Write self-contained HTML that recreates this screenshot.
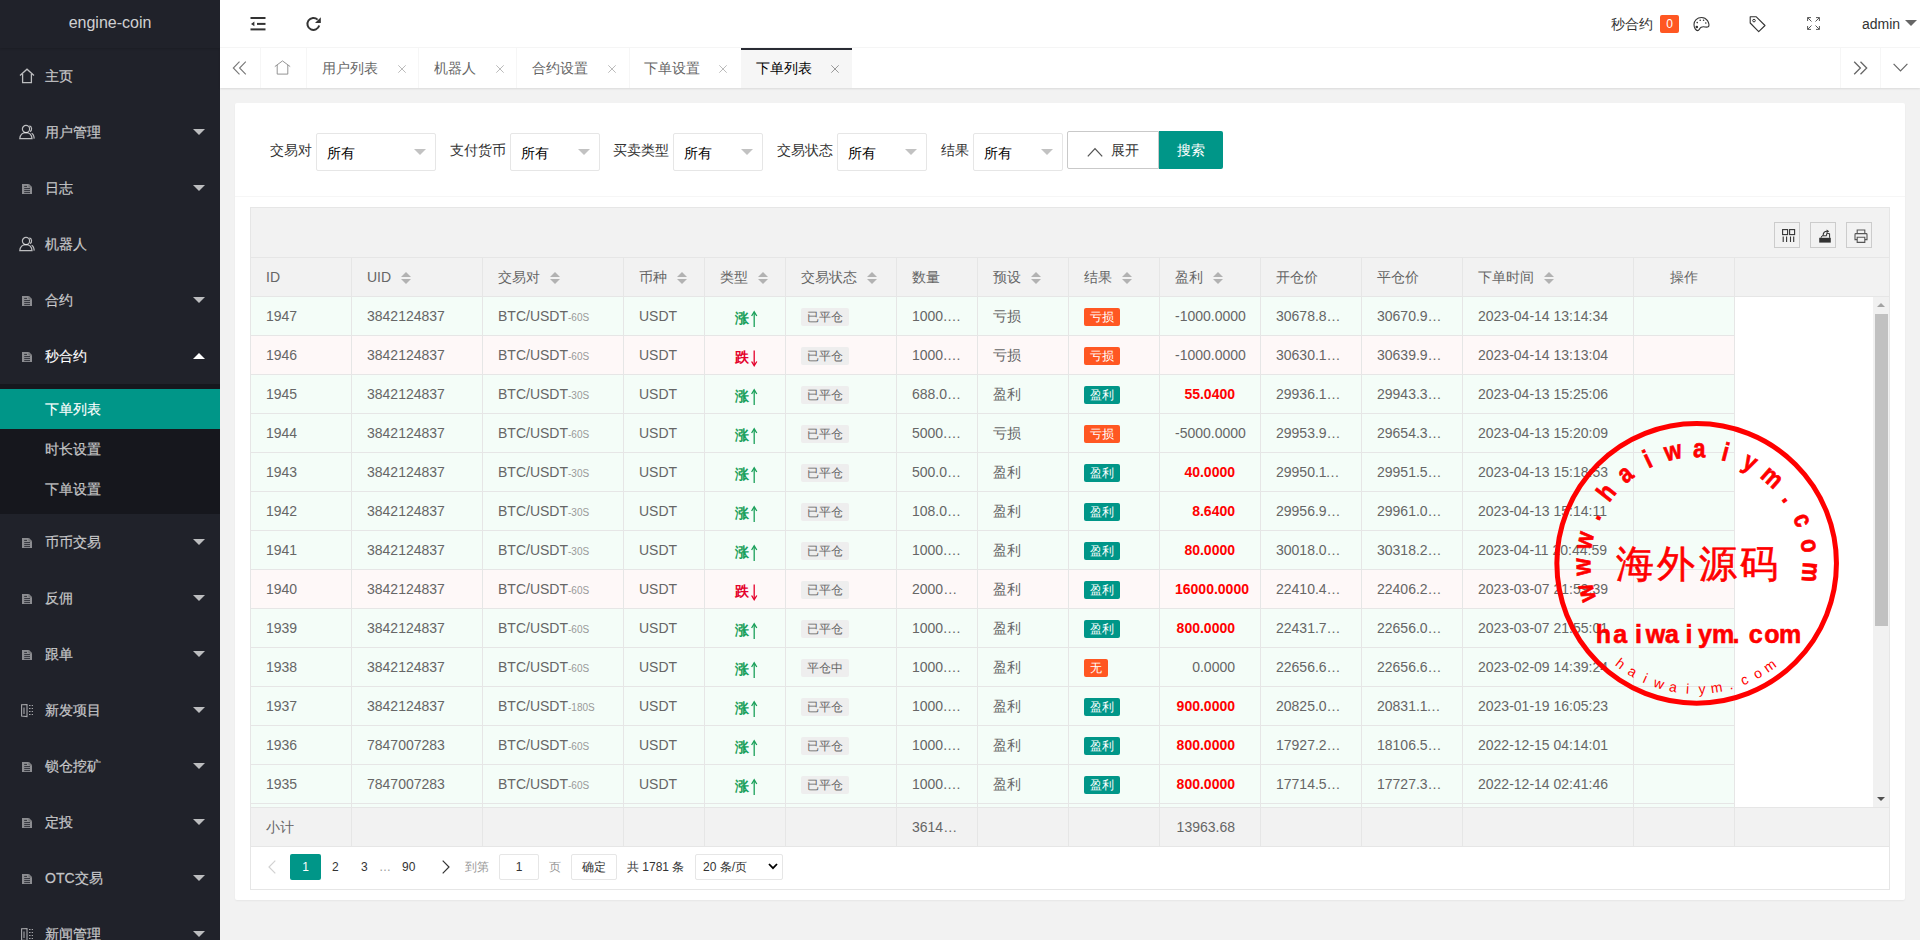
<!DOCTYPE html><html><head><meta charset="utf-8"><title>engine-coin</title><style>
*{box-sizing:border-box;margin:0;padding:0}
html,body{width:1920px;height:940px;overflow:hidden}
body{background:#f2f2f2;font-family:"Liberation Sans",sans-serif;font-size:14px;color:#666;position:relative}
.a{position:absolute}
svg{position:absolute;overflow:visible}
#side{left:0;top:0;width:220px;height:940px;background:#20222A;overflow:hidden}
#logo{left:0;top:0;width:220px;height:48px;background:#20222A;box-shadow:0 1px 2px 0 rgba(0,0,0,.15);color:rgba(255,255,255,.8);font-size:16px;text-align:center;line-height:46px;z-index:2}
.nav{position:absolute;left:0;width:220px;height:56px;color:rgba(255,255,255,.7)}
.nav .tx{position:absolute;left:45px;top:0;line-height:56px;white-space:nowrap;-webkit-text-stroke:0.3px rgba(255,255,255,.5)}
.nav .ar{position:absolute;left:193px;top:25px;width:0;height:0;border-left:6px solid transparent;border-right:6px solid transparent;border-top:6px solid rgba(255,255,255,.7)}
.nav .ar.up{top:25px;border-top:0;border-bottom:6px solid #fff}
#sub{left:0;top:384px;width:220px;height:130px;background:rgba(0,0,0,.3)}
.sub{position:absolute;left:0;width:220px;height:40px;line-height:40px;padding-left:45px;color:rgba(255,255,255,.7);-webkit-text-stroke:0.3px rgba(255,255,255,.5)}
.sub.on{background:#009688;color:#fff}
#hdr{left:220px;top:0;width:1700px;height:48px;background:#fff;border-bottom:1px solid #f6f6f6}
#tabs{left:220px;top:48px;width:1700px;height:40px;background:#fff;box-shadow:0 1px 2px 0 rgba(0,0,0,.1);z-index:1}
.tab{position:absolute;top:0;height:40px;line-height:40px;color:#666;border-right:1px solid #f6f6f6;white-space:nowrap}
.tab .x{position:absolute;top:17px;width:8px;height:8px}
#card{left:235px;top:103px;width:1670px;height:797px;background:#fff;border-radius:2px;box-shadow:0 1px 2px 0 rgba(0,0,0,.05)}
.lbl{position:absolute;color:#333;white-space:nowrap;line-height:20px}
.sel{position:absolute;height:38px;border:1px solid #e6e6e6;background:#fff;border-radius:2px}
.sel span{position:absolute;left:10px;top:0;line-height:38px;color:#000}
.sel i{position:absolute;right:9px;top:15px;width:0;height:0;border-left:6px solid transparent;border-right:6px solid transparent;border-top:6px solid #c2c2c2}
#tbl{left:250px;top:207px;width:1640px;height:683px;border:1px solid #e6e6e6;background:#fff}
.th,.td{position:absolute;overflow:hidden;white-space:nowrap}
.vl{position:absolute;width:1px;background:#e6e6e6}
.hl{position:absolute;height:1px;background:#e6e6e6}
.cell{position:absolute;height:38px;line-height:38px;padding:0 15px;overflow:hidden;white-space:nowrap;text-overflow:ellipsis}
.bdg{display:inline-block;height:18px;line-height:18px;padding:0 6px;font-size:12px;color:#fff;border-radius:2px;vertical-align:middle;position:relative;top:0px}
.tb{position:absolute;top:14px;width:26px;height:26px;border:1px solid #ccc}
</style></head><body>
<div id="side" class="a"><div id="logo" class="a">engine-coin</div>
<div class="nav" style="top:48px"><svg style="left:19px;top:20px" width="16" height="16" viewBox="0 0 16 16"><path d="M1 7.5 L8 1.2 L15 7.5 M3.6 6 V14.6 H12.4 V6" fill="none" stroke="rgba(255,255,255,.7)" stroke-width="1.3"/></svg><span class="tx">主页</span></div>
<div class="nav" style="top:104px"><svg style="left:19px;top:20px" width="16" height="16" viewBox="0 0 16 16"><g fill="none" stroke="rgba(255,255,255,.7)" stroke-width="1.2"><circle cx="7" cy="5" r="3.6"/><path d="M0.8 14.6 C1.2 10.5 3.5 8.6 7 8.6 C10.5 8.6 12.6 10.5 13 14.6 Z"/><path d="M10.4 1.8 C13 2.3 13.4 6.5 11 7.6 M12.6 9.2 C14.4 10 15 12 15.2 14.6"/></g></svg><span class="tx">用户管理</span><i class="ar"></i></div>
<div class="nav" style="top:160px"><svg style="left:22px;top:24px" width="10" height="10" viewBox="0 0 10 10"><path d="M0 0 H7 L10 3 V10 H0 Z" fill="#8c8d91"/><path d="M2.2 2.4 H5 M2.2 4.6 H8 M2.2 6.6 H8 M2.2 8.6 H8" stroke="#25272e" stroke-width="0.9"/><path d="M7 0 V3 H10" fill="none" stroke="#5a5b60" stroke-width="0.6"/></svg><span class="tx">日志</span><i class="ar"></i></div>
<div class="nav" style="top:216px"><svg style="left:19px;top:20px" width="16" height="16" viewBox="0 0 16 16"><g fill="none" stroke="rgba(255,255,255,.7)" stroke-width="1.2"><circle cx="7" cy="5" r="3.6"/><path d="M0.8 14.6 C1.2 10.5 3.5 8.6 7 8.6 C10.5 8.6 12.6 10.5 13 14.6 Z"/><path d="M10.4 1.8 C13 2.3 13.4 6.5 11 7.6 M12.6 9.2 C14.4 10 15 12 15.2 14.6"/></g></svg><span class="tx">机器人</span></div>
<div class="nav" style="top:272px"><svg style="left:22px;top:24px" width="10" height="10" viewBox="0 0 10 10"><path d="M0 0 H7 L10 3 V10 H0 Z" fill="#8c8d91"/><path d="M2.2 2.4 H5 M2.2 4.6 H8 M2.2 6.6 H8 M2.2 8.6 H8" stroke="#25272e" stroke-width="0.9"/><path d="M7 0 V3 H10" fill="none" stroke="#5a5b60" stroke-width="0.6"/></svg><span class="tx">合约</span><i class="ar"></i></div>
<div class="nav" style="top:328px"><svg style="left:22px;top:24px" width="10" height="10" viewBox="0 0 10 10"><path d="M0 0 H7 L10 3 V10 H0 Z" fill="#8c8d91"/><path d="M2.2 2.4 H5 M2.2 4.6 H8 M2.2 6.6 H8 M2.2 8.6 H8" stroke="#25272e" stroke-width="0.9"/><path d="M7 0 V3 H10" fill="none" stroke="#5a5b60" stroke-width="0.6"/></svg><span class="tx" style="color:#fff">秒合约</span><i class="ar up"></i></div>
<div class="nav" style="top:514px"><svg style="left:22px;top:24px" width="10" height="10" viewBox="0 0 10 10"><path d="M0 0 H7 L10 3 V10 H0 Z" fill="#8c8d91"/><path d="M2.2 2.4 H5 M2.2 4.6 H8 M2.2 6.6 H8 M2.2 8.6 H8" stroke="#25272e" stroke-width="0.9"/><path d="M7 0 V3 H10" fill="none" stroke="#5a5b60" stroke-width="0.6"/></svg><span class="tx">币币交易</span><i class="ar"></i></div>
<div class="nav" style="top:570px"><svg style="left:22px;top:24px" width="10" height="10" viewBox="0 0 10 10"><path d="M0 0 H7 L10 3 V10 H0 Z" fill="#8c8d91"/><path d="M2.2 2.4 H5 M2.2 4.6 H8 M2.2 6.6 H8 M2.2 8.6 H8" stroke="#25272e" stroke-width="0.9"/><path d="M7 0 V3 H10" fill="none" stroke="#5a5b60" stroke-width="0.6"/></svg><span class="tx">反佣</span><i class="ar"></i></div>
<div class="nav" style="top:626px"><svg style="left:22px;top:24px" width="10" height="10" viewBox="0 0 10 10"><path d="M0 0 H7 L10 3 V10 H0 Z" fill="#8c8d91"/><path d="M2.2 2.4 H5 M2.2 4.6 H8 M2.2 6.6 H8 M2.2 8.6 H8" stroke="#25272e" stroke-width="0.9"/><path d="M7 0 V3 H10" fill="none" stroke="#5a5b60" stroke-width="0.6"/></svg><span class="tx">跟单</span><i class="ar"></i></div>
<div class="nav" style="top:682px"><svg style="left:21px;top:22px" width="13" height="13" viewBox="0 0 13 13"><g fill="none" stroke="rgba(255,255,255,.6)" stroke-width="1.1"><path d="M0.6 0.8 V12 L6 12.6 V0.6 Z"/><path d="M3 3.5 V10"/><path d="M8 1.5 H12 M8 4.5 H12 M8 7.5 H12 M8 10.5 H12" stroke-dasharray="1.5 1.2"/></g></svg><span class="tx">新发项目</span><i class="ar"></i></div>
<div class="nav" style="top:738px"><svg style="left:22px;top:24px" width="10" height="10" viewBox="0 0 10 10"><path d="M0 0 H7 L10 3 V10 H0 Z" fill="#8c8d91"/><path d="M2.2 2.4 H5 M2.2 4.6 H8 M2.2 6.6 H8 M2.2 8.6 H8" stroke="#25272e" stroke-width="0.9"/><path d="M7 0 V3 H10" fill="none" stroke="#5a5b60" stroke-width="0.6"/></svg><span class="tx">锁仓挖矿</span><i class="ar"></i></div>
<div class="nav" style="top:794px"><svg style="left:22px;top:24px" width="10" height="10" viewBox="0 0 10 10"><path d="M0 0 H7 L10 3 V10 H0 Z" fill="#8c8d91"/><path d="M2.2 2.4 H5 M2.2 4.6 H8 M2.2 6.6 H8 M2.2 8.6 H8" stroke="#25272e" stroke-width="0.9"/><path d="M7 0 V3 H10" fill="none" stroke="#5a5b60" stroke-width="0.6"/></svg><span class="tx">定投</span><i class="ar"></i></div>
<div class="nav" style="top:850px"><svg style="left:22px;top:24px" width="10" height="10" viewBox="0 0 10 10"><path d="M0 0 H7 L10 3 V10 H0 Z" fill="#8c8d91"/><path d="M2.2 2.4 H5 M2.2 4.6 H8 M2.2 6.6 H8 M2.2 8.6 H8" stroke="#25272e" stroke-width="0.9"/><path d="M7 0 V3 H10" fill="none" stroke="#5a5b60" stroke-width="0.6"/></svg><span class="tx">OTC交易</span><i class="ar"></i></div>
<div class="nav" style="top:906px"><svg style="left:21px;top:22px" width="13" height="13" viewBox="0 0 13 13"><g fill="none" stroke="rgba(255,255,255,.6)" stroke-width="1.1"><path d="M0.6 0.8 V12 L6 12.6 V0.6 Z"/><path d="M3 3.5 V10"/><path d="M8 1.5 H12 M8 4.5 H12 M8 7.5 H12 M8 10.5 H12" stroke-dasharray="1.5 1.2"/></g></svg><span class="tx">新闻管理</span><i class="ar"></i></div>
<div id="sub" class="a"></div>
<div class="sub on" style="top:389px">下单列表</div>
<div class="sub" style="top:429px">时长设置</div>
<div class="sub" style="top:469px">下单设置</div>
</div>
<div id="hdr" class="a">
<svg style="left:30px;top:16px" width="16" height="16" viewBox="0 0 16 16"><g fill="#333"><rect x="0.5" y="1" width="15" height="2"/><rect x="7" y="6.9" width="8.5" height="2"/><rect x="0.5" y="12.4" width="15" height="2"/><path d="M1 7.9 L4.4 5.6 V10.2 Z"/></g></svg>
<svg style="left:86px;top:16px" width="16" height="16" viewBox="0 0 16 16"><path d="M13.2 9.5 A6 6 0 1 1 11.6 3.6" fill="none" stroke="#333" stroke-width="2"/><path d="M14.8 1.2 V7 H9 Z" fill="#333"/></svg>
<span class="a" style="left:1391px;top:14px;line-height:20px;color:#333;">秒合约</span>
<span class="a" style="left:1440px;top:15px;width:19px;height:18px;line-height:18px;background:#FF5722;color:#fff;text-align:center;font-size:12px;border-radius:2px">0</span>
<svg style="left:1473px;top:16px" width="17" height="16" viewBox="0 0 17 16"><path d="M8.5 1.5 C4 1.5 1 4.8 1 8.5 C1 12 3 14.6 4.6 14.6 C6.4 14.6 6.3 12.2 8.2 11.2 C10.4 10 13.5 11.8 15.2 10.8 C16.6 10 16 6.8 14.5 4.6 C13 2.5 10.8 1.5 8.5 1.5 Z" fill="none" stroke="#333" stroke-width="1.1"/><g fill="#333"><circle cx="3.8" cy="11" r="1.3"/><circle cx="4.2" cy="6.6" r="0.8"/><circle cx="7.2" cy="4.3" r="0.8"/><circle cx="10.6" cy="4.3" r="0.8"/><circle cx="12.8" cy="7" r="0.8"/></g></svg>
<svg style="left:1529px;top:16px" width="17" height="16" viewBox="0 0 17 16"><path d="M1.2 0.8 H7.3 L16 9.5 L9.7 15.6 L1.2 7 Z" fill="none" stroke="#333" stroke-width="1.1" stroke-linejoin="round"/><circle cx="5" cy="4.6" r="1.3" fill="none" stroke="#333" stroke-width="1"/></svg>
<svg style="left:1587px;top:17px" width="13" height="13" viewBox="0 0 13 13"><g fill="none" stroke="#555" stroke-width="1"><path d="M0.6 4 V0.6 H4 M0.6 0.6 L4.5 4.5"/><path d="M12.4 4 V0.6 H9 M12.4 0.6 L8.5 4.5"/><path d="M0.6 9 V12.4 H4 M0.6 12.4 L4.5 8.5"/><path d="M12.4 9 V12.4 H9 M12.4 12.4 L8.5 8.5"/></g></svg>
<span class="a" style="left:1642px;top:14px;line-height:20px;color:#333">admin</span>
<i class="a" style="left:1685px;top:20px;width:0;height:0;border-left:6px solid transparent;border-right:6px solid transparent;border-top:6px solid #666"></i>
</div>
<div id="tabs" class="a">
<div class="a" style="left:40px;top:0;width:1px;height:40px;background:#f6f6f6"></div>
<div class="a" style="left:86px;top:0;width:1px;height:40px;background:#f6f6f6"></div>
<div class="a" style="left:198px;top:0;width:1px;height:40px;background:#f6f6f6"></div>
<div class="a" style="left:296px;top:0;width:1px;height:40px;background:#f6f6f6"></div>
<div class="a" style="left:409px;top:0;width:1px;height:40px;background:#f6f6f6"></div>
<div class="a" style="left:521px;top:0;width:1px;height:40px;background:#f6f6f6"></div>
<svg style="left:12px;top:13px" width="15" height="14" viewBox="0 0 15 14"><path d="M7.5 0.7 L1.3 7 L7.5 13.3 M13.8 0.7 L7.6 7 L13.8 13.3" fill="none" stroke="#777" stroke-width="1.1"/></svg>
<svg style="left:54px;top:12px" width="17" height="15" viewBox="0 0 17 15"><path d="M0.8 6.6 L8.5 0.9 L16.2 6.6 M3.2 5 V14.1 H13.8 V5" fill="none" stroke="#888" stroke-width="0.9"/></svg>
<div class="a" style="left:521px;top:0;width:111px;height:40px;background:#f6f6f6"></div>
<div class="a" style="left:521px;top:0;width:111px;height:2px;background:#292B34"></div>
<span class="a" style="left:102px;top:0;line-height:40px;color:#666">用户列表</span>
<svg style="left:178px;top:17px" width="8" height="8" viewBox="0 0 8 8"><path d="M0.3 0.3 L7.7 7.7 M7.7 0.3 L0.3 7.7" stroke="#bbb" stroke-width="1"/></svg>
<span class="a" style="left:214px;top:0;line-height:40px;color:#666">机器人</span>
<svg style="left:276px;top:17px" width="8" height="8" viewBox="0 0 8 8"><path d="M0.3 0.3 L7.7 7.7 M7.7 0.3 L0.3 7.7" stroke="#bbb" stroke-width="1"/></svg>
<span class="a" style="left:312px;top:0;line-height:40px;color:#666">合约设置</span>
<svg style="left:388px;top:17px" width="8" height="8" viewBox="0 0 8 8"><path d="M0.3 0.3 L7.7 7.7 M7.7 0.3 L0.3 7.7" stroke="#bbb" stroke-width="1"/></svg>
<span class="a" style="left:424px;top:0;line-height:40px;color:#666">下单设置</span>
<svg style="left:499px;top:17px" width="8" height="8" viewBox="0 0 8 8"><path d="M0.3 0.3 L7.7 7.7 M7.7 0.3 L0.3 7.7" stroke="#bbb" stroke-width="1"/></svg>
<span class="a" style="left:536px;top:0;line-height:40px;color:#000">下单列表</span>
<svg style="left:611px;top:17px" width="8" height="8" viewBox="0 0 8 8"><path d="M0.3 0.3 L7.7 7.7 M7.7 0.3 L0.3 7.7" stroke="#999" stroke-width="1"/></svg>
<div class="a" style="left:1620px;top:0;width:1px;height:40px;background:#f6f6f6"></div>
<div class="a" style="left:1660px;top:0;width:1px;height:40px;background:#f6f6f6"></div>
<svg style="left:1633px;top:13px" width="15" height="14" viewBox="0 0 15 14"><path d="M1.2 0.7 L7.4 7 L1.2 13.3 M7.5 0.7 L13.7 7 L7.5 13.3" fill="none" stroke="#666" stroke-width="1.3"/></svg>
<svg style="left:1673px;top:15px" width="15" height="9" viewBox="0 0 15 9"><path d="M0.6 0.8 L7.5 7.8 L14.4 0.8" fill="none" stroke="#666" stroke-width="1.2"/></svg>
</div>
<div id="card" class="a">
<div class="a" style="left:0;top:93px;width:1670px;height:1px;background:#f6f6f6"></div>
</div>
<span class="lbl" style="left:270px;top:140px">交易对</span>
<div class="sel" style="left:316px;top:133px;width:120px"><span>所有</span><i></i></div>
<span class="lbl" style="left:450px;top:140px">支付货币</span>
<div class="sel" style="left:510px;top:133px;width:90px"><span>所有</span><i></i></div>
<span class="lbl" style="left:613px;top:140px">买卖类型</span>
<div class="sel" style="left:673px;top:133px;width:90px"><span>所有</span><i></i></div>
<span class="lbl" style="left:777px;top:140px">交易状态</span>
<div class="sel" style="left:837px;top:133px;width:90px"><span>所有</span><i></i></div>
<span class="lbl" style="left:941px;top:140px">结果</span>
<div class="sel" style="left:973px;top:133px;width:90px"><span>所有</span><i></i></div>
<div class="a" style="left:1067px;top:131px;width:92px;height:38px;border:1px solid #C9C9C9;border-radius:2px 0 0 2px;background:#fff"></div>
<svg style="left:1087px;top:147px" width="16" height="10" viewBox="0 0 16 10"><path d="M0.8 9.4 L8 1.6 L15.2 9.4" fill="none" stroke="#555" stroke-width="1.3"/></svg>
<span class="a" style="left:1111px;top:140px;line-height:20px;color:#333">展开</span>
<div class="a" style="left:1159px;top:131px;width:64px;height:38px;background:#009688;border-radius:0 2px 2px 0;color:#fff;text-align:center;line-height:38px">搜索</div>
<div id="tbl" class="a">
<div class="a" style="left:0;top:0;width:1638px;height:50px;background:#f2f2f2;border-bottom:1px solid #e6e6e6"></div>
<div class="tb" style="left:1523px"></div>
<div class="tb" style="left:1559px"></div>
<div class="tb" style="left:1595px"></div>
<svg style="left:1531px;top:21px" width="14" height="14" viewBox="0 0 14 14"><g fill="none" stroke="#333" stroke-width="1.1"><rect x="0.6" y="0.6" width="5" height="5"/><rect x="7.6" y="0.6" width="5" height="5"/></g><g stroke="#333" stroke-width="1.1"><path d="M1.2 7.6 V13 M4.6 7.6 V13 M8.5 7.6 V13 M11.7 7.6 V13"/></g></svg>
<svg style="left:1567px;top:21px" width="14" height="14" viewBox="0 0 14 14"><path d="M1.2 8.8 H12.8 V13.6 H1.2 Z" fill="#333"/><path d="M3 8.8 L4 6.8 H8.6 V4.6 H11.6 V8.8" fill="none" stroke="#333" stroke-width="1"/><path d="M5.2 6.6 C5 4 6.5 2.2 9 2.2" fill="none" stroke="#333" stroke-width="1.1"/><path d="M8.6 0.4 L11.2 2.3 L8.6 4.2 Z" fill="#333"/></svg>
<svg style="left:1603px;top:21px" width="14" height="14" viewBox="0 0 14 14"><g fill="none" stroke="#555" stroke-width="1.1"><path d="M3.2 4.6 V1 H10.8 V4.6"/><path d="M3 10.6 H1 V5.4 Q1 4.6 1.8 4.6 H12.2 Q13 4.6 13 5.4 V10.6 H11"/><path d="M3.2 8.2 H10.8 V13.4 H3.2 Z"/></g></svg>
</div>
<div class="a" style="left:251px;top:258px;width:1638px;height:39px;background:#f2f2f2;border-bottom:1px solid #e6e6e6"></div>
<div class="cell" style="left:251px;top:258px;width:100px;">ID</div>
<div class="vl" style="left:351px;top:258px;height:39px"></div>
<div class="cell" style="left:352px;top:258px;width:130px;">UID<span style="display:inline-block;position:relative;width:10px;height:12px;margin-left:10px;vertical-align:middle;top:0px"><i style="position:absolute;left:0;top:0;border:5px solid transparent;border-bottom-color:#b2b2b2;border-top:0"></i><i style="position:absolute;left:0;top:7px;border:5px solid transparent;border-top-color:#b2b2b2;border-bottom:0"></i></span></div>
<div class="vl" style="left:482px;top:258px;height:39px"></div>
<div class="cell" style="left:483px;top:258px;width:140px;">交易对<span style="display:inline-block;position:relative;width:10px;height:12px;margin-left:10px;vertical-align:middle;top:0px"><i style="position:absolute;left:0;top:0;border:5px solid transparent;border-bottom-color:#b2b2b2;border-top:0"></i><i style="position:absolute;left:0;top:7px;border:5px solid transparent;border-top-color:#b2b2b2;border-bottom:0"></i></span></div>
<div class="vl" style="left:623px;top:258px;height:39px"></div>
<div class="cell" style="left:624px;top:258px;width:80px;">币种<span style="display:inline-block;position:relative;width:10px;height:12px;margin-left:10px;vertical-align:middle;top:0px"><i style="position:absolute;left:0;top:0;border:5px solid transparent;border-bottom-color:#b2b2b2;border-top:0"></i><i style="position:absolute;left:0;top:7px;border:5px solid transparent;border-top-color:#b2b2b2;border-bottom:0"></i></span></div>
<div class="vl" style="left:704px;top:258px;height:39px"></div>
<div class="cell" style="left:705px;top:258px;width:80px;">类型<span style="display:inline-block;position:relative;width:10px;height:12px;margin-left:10px;vertical-align:middle;top:0px"><i style="position:absolute;left:0;top:0;border:5px solid transparent;border-bottom-color:#b2b2b2;border-top:0"></i><i style="position:absolute;left:0;top:7px;border:5px solid transparent;border-top-color:#b2b2b2;border-bottom:0"></i></span></div>
<div class="vl" style="left:785px;top:258px;height:39px"></div>
<div class="cell" style="left:786px;top:258px;width:110px;">交易状态<span style="display:inline-block;position:relative;width:10px;height:12px;margin-left:10px;vertical-align:middle;top:0px"><i style="position:absolute;left:0;top:0;border:5px solid transparent;border-bottom-color:#b2b2b2;border-top:0"></i><i style="position:absolute;left:0;top:7px;border:5px solid transparent;border-top-color:#b2b2b2;border-bottom:0"></i></span></div>
<div class="vl" style="left:896px;top:258px;height:39px"></div>
<div class="cell" style="left:897px;top:258px;width:80px;">数量</div>
<div class="vl" style="left:977px;top:258px;height:39px"></div>
<div class="cell" style="left:978px;top:258px;width:90px;">预设<span style="display:inline-block;position:relative;width:10px;height:12px;margin-left:10px;vertical-align:middle;top:0px"><i style="position:absolute;left:0;top:0;border:5px solid transparent;border-bottom-color:#b2b2b2;border-top:0"></i><i style="position:absolute;left:0;top:7px;border:5px solid transparent;border-top-color:#b2b2b2;border-bottom:0"></i></span></div>
<div class="vl" style="left:1068px;top:258px;height:39px"></div>
<div class="cell" style="left:1069px;top:258px;width:90px;">结果<span style="display:inline-block;position:relative;width:10px;height:12px;margin-left:10px;vertical-align:middle;top:0px"><i style="position:absolute;left:0;top:0;border:5px solid transparent;border-bottom-color:#b2b2b2;border-top:0"></i><i style="position:absolute;left:0;top:7px;border:5px solid transparent;border-top-color:#b2b2b2;border-bottom:0"></i></span></div>
<div class="vl" style="left:1159px;top:258px;height:39px"></div>
<div class="cell" style="left:1160px;top:258px;width:100px;">盈利<span style="display:inline-block;position:relative;width:10px;height:12px;margin-left:10px;vertical-align:middle;top:0px"><i style="position:absolute;left:0;top:0;border:5px solid transparent;border-bottom-color:#b2b2b2;border-top:0"></i><i style="position:absolute;left:0;top:7px;border:5px solid transparent;border-top-color:#b2b2b2;border-bottom:0"></i></span></div>
<div class="vl" style="left:1260px;top:258px;height:39px"></div>
<div class="cell" style="left:1261px;top:258px;width:100px;">开仓价</div>
<div class="vl" style="left:1361px;top:258px;height:39px"></div>
<div class="cell" style="left:1362px;top:258px;width:100px;">平仓价</div>
<div class="vl" style="left:1462px;top:258px;height:39px"></div>
<div class="cell" style="left:1463px;top:258px;width:170px;">下单时间<span style="display:inline-block;position:relative;width:10px;height:12px;margin-left:10px;vertical-align:middle;top:0px"><i style="position:absolute;left:0;top:0;border:5px solid transparent;border-bottom-color:#b2b2b2;border-top:0"></i><i style="position:absolute;left:0;top:7px;border:5px solid transparent;border-top-color:#b2b2b2;border-bottom:0"></i></span></div>
<div class="vl" style="left:1633px;top:258px;height:39px"></div>
<div class="cell" style="left:1634px;top:258px;width:100px;text-align:center;">操作</div>
<div class="vl" style="left:1734px;top:258px;height:39px"></div>
<div class="a" style="left:251px;top:297px;width:1622px;height:510px;overflow:hidden;background:#fff">
<div class="a" style="left:0;top:0px;width:1483px;height:39px;background:#f4fdf8;border-bottom:1px solid #e6e6e6"></div>
<div class="cell" style="left:0px;top:0px;width:100px;">1947</div>
<div class="vl" style="left:100px;top:0px;height:39px"></div>
<div class="cell" style="left:101px;top:0px;width:130px;">3842124837</div>
<div class="vl" style="left:231px;top:0px;height:39px"></div>
<div class="cell" style="left:232px;top:0px;width:140px;">BTC/USDT<span style="font-size:10px;color:#999">-60S</span></div>
<div class="vl" style="left:372px;top:0px;height:39px"></div>
<div class="cell" style="left:373px;top:0px;width:80px;">USDT</div>
<div class="vl" style="left:453px;top:0px;height:39px"></div>
<div class="cell" style="left:454px;top:0px;width:80px;text-align:center;"><span style="position:absolute;left:30px;top:2px;color:#1aa05a;font-weight:bold">涨</span><svg style="left:46px;top:14px" width="7" height="17" viewBox="0 0 7 17"><path d="M3.2 1.5 V16" stroke="#1aa05a" stroke-width="1.3"/><path d="M0.6 5 L3.2 0.8 L5.8 5" fill="none" stroke="#1aa05a" stroke-width="1.3"/></svg></div>
<div class="vl" style="left:534px;top:0px;height:39px"></div>
<div class="cell" style="left:535px;top:0px;width:110px;"><span class="bdg" style="background:#eee;color:#666">已平仓</span></div>
<div class="vl" style="left:645px;top:0px;height:39px"></div>
<div class="cell" style="left:646px;top:0px;width:80px;">1000.0000</div>
<div class="vl" style="left:726px;top:0px;height:39px"></div>
<div class="cell" style="left:727px;top:0px;width:90px;">亏损</div>
<div class="vl" style="left:817px;top:0px;height:39px"></div>
<div class="cell" style="left:818px;top:0px;width:90px;"><span class="bdg" style="background:#FF5722">亏损</span></div>
<div class="vl" style="left:908px;top:0px;height:39px"></div>
<div class="cell" style="left:909px;top:0px;width:100px;text-align:right;padding-right:25px;text-overflow:clip;">-1000.0000</div>
<div class="vl" style="left:1009px;top:0px;height:39px"></div>
<div class="cell" style="left:1010px;top:0px;width:100px;">30678.8100</div>
<div class="vl" style="left:1110px;top:0px;height:39px"></div>
<div class="cell" style="left:1111px;top:0px;width:100px;">30670.9200</div>
<div class="vl" style="left:1211px;top:0px;height:39px"></div>
<div class="cell" style="left:1212px;top:0px;width:170px;">2023-04-14 13:14:34</div>
<div class="vl" style="left:1382px;top:0px;height:39px"></div>
<div class="cell" style="left:1383px;top:0px;width:100px;text-align:center;"></div>
<div class="vl" style="left:1483px;top:0px;height:39px"></div>
<div class="a" style="left:0;top:39px;width:1483px;height:39px;background:#fef8f8;border-bottom:1px solid #e6e6e6"></div>
<div class="cell" style="left:0px;top:39px;width:100px;">1946</div>
<div class="vl" style="left:100px;top:39px;height:39px"></div>
<div class="cell" style="left:101px;top:39px;width:130px;">3842124837</div>
<div class="vl" style="left:231px;top:39px;height:39px"></div>
<div class="cell" style="left:232px;top:39px;width:140px;">BTC/USDT<span style="font-size:10px;color:#999">-60S</span></div>
<div class="vl" style="left:372px;top:39px;height:39px"></div>
<div class="cell" style="left:373px;top:39px;width:80px;">USDT</div>
<div class="vl" style="left:453px;top:39px;height:39px"></div>
<div class="cell" style="left:454px;top:39px;width:80px;text-align:center;"><span style="position:absolute;left:30px;top:2px;color:#e4002b;font-weight:bold">跌</span><svg style="left:46px;top:14px" width="7" height="17" viewBox="0 0 7 17"><path d="M3.2 0.5 V15" stroke="#e4002b" stroke-width="1.3"/><path d="M0.6 11.5 L3.2 15.7 L5.8 11.5" fill="none" stroke="#e4002b" stroke-width="1.3"/></svg></div>
<div class="vl" style="left:534px;top:39px;height:39px"></div>
<div class="cell" style="left:535px;top:39px;width:110px;"><span class="bdg" style="background:#eee;color:#666">已平仓</span></div>
<div class="vl" style="left:645px;top:39px;height:39px"></div>
<div class="cell" style="left:646px;top:39px;width:80px;">1000.0000</div>
<div class="vl" style="left:726px;top:39px;height:39px"></div>
<div class="cell" style="left:727px;top:39px;width:90px;">亏损</div>
<div class="vl" style="left:817px;top:39px;height:39px"></div>
<div class="cell" style="left:818px;top:39px;width:90px;"><span class="bdg" style="background:#FF5722">亏损</span></div>
<div class="vl" style="left:908px;top:39px;height:39px"></div>
<div class="cell" style="left:909px;top:39px;width:100px;text-align:right;padding-right:25px;text-overflow:clip;">-1000.0000</div>
<div class="vl" style="left:1009px;top:39px;height:39px"></div>
<div class="cell" style="left:1010px;top:39px;width:100px;">30630.1500</div>
<div class="vl" style="left:1110px;top:39px;height:39px"></div>
<div class="cell" style="left:1111px;top:39px;width:100px;">30639.9100</div>
<div class="vl" style="left:1211px;top:39px;height:39px"></div>
<div class="cell" style="left:1212px;top:39px;width:170px;">2023-04-14 13:13:04</div>
<div class="vl" style="left:1382px;top:39px;height:39px"></div>
<div class="cell" style="left:1383px;top:39px;width:100px;text-align:center;"></div>
<div class="vl" style="left:1483px;top:39px;height:39px"></div>
<div class="a" style="left:0;top:78px;width:1483px;height:39px;background:#f4fdf8;border-bottom:1px solid #e6e6e6"></div>
<div class="cell" style="left:0px;top:78px;width:100px;">1945</div>
<div class="vl" style="left:100px;top:78px;height:39px"></div>
<div class="cell" style="left:101px;top:78px;width:130px;">3842124837</div>
<div class="vl" style="left:231px;top:78px;height:39px"></div>
<div class="cell" style="left:232px;top:78px;width:140px;">BTC/USDT<span style="font-size:10px;color:#999">-30S</span></div>
<div class="vl" style="left:372px;top:78px;height:39px"></div>
<div class="cell" style="left:373px;top:78px;width:80px;">USDT</div>
<div class="vl" style="left:453px;top:78px;height:39px"></div>
<div class="cell" style="left:454px;top:78px;width:80px;text-align:center;"><span style="position:absolute;left:30px;top:2px;color:#1aa05a;font-weight:bold">涨</span><svg style="left:46px;top:14px" width="7" height="17" viewBox="0 0 7 17"><path d="M3.2 1.5 V16" stroke="#1aa05a" stroke-width="1.3"/><path d="M0.6 5 L3.2 0.8 L5.8 5" fill="none" stroke="#1aa05a" stroke-width="1.3"/></svg></div>
<div class="vl" style="left:534px;top:78px;height:39px"></div>
<div class="cell" style="left:535px;top:78px;width:110px;"><span class="bdg" style="background:#eee;color:#666">已平仓</span></div>
<div class="vl" style="left:645px;top:78px;height:39px"></div>
<div class="cell" style="left:646px;top:78px;width:80px;">688.0000</div>
<div class="vl" style="left:726px;top:78px;height:39px"></div>
<div class="cell" style="left:727px;top:78px;width:90px;">盈利</div>
<div class="vl" style="left:817px;top:78px;height:39px"></div>
<div class="cell" style="left:818px;top:78px;width:90px;"><span class="bdg" style="background:#009688">盈利</span></div>
<div class="vl" style="left:908px;top:78px;height:39px"></div>
<div class="cell" style="left:909px;top:78px;width:100px;text-align:right;padding-right:25px;text-overflow:clip;"><b style="color:#f00">55.0400</b></div>
<div class="vl" style="left:1009px;top:78px;height:39px"></div>
<div class="cell" style="left:1010px;top:78px;width:100px;">29936.1200</div>
<div class="vl" style="left:1110px;top:78px;height:39px"></div>
<div class="cell" style="left:1111px;top:78px;width:100px;">29943.3400</div>
<div class="vl" style="left:1211px;top:78px;height:39px"></div>
<div class="cell" style="left:1212px;top:78px;width:170px;">2023-04-13 15:25:06</div>
<div class="vl" style="left:1382px;top:78px;height:39px"></div>
<div class="cell" style="left:1383px;top:78px;width:100px;text-align:center;"></div>
<div class="vl" style="left:1483px;top:78px;height:39px"></div>
<div class="a" style="left:0;top:117px;width:1483px;height:39px;background:#f4fdf8;border-bottom:1px solid #e6e6e6"></div>
<div class="cell" style="left:0px;top:117px;width:100px;">1944</div>
<div class="vl" style="left:100px;top:117px;height:39px"></div>
<div class="cell" style="left:101px;top:117px;width:130px;">3842124837</div>
<div class="vl" style="left:231px;top:117px;height:39px"></div>
<div class="cell" style="left:232px;top:117px;width:140px;">BTC/USDT<span style="font-size:10px;color:#999">-60S</span></div>
<div class="vl" style="left:372px;top:117px;height:39px"></div>
<div class="cell" style="left:373px;top:117px;width:80px;">USDT</div>
<div class="vl" style="left:453px;top:117px;height:39px"></div>
<div class="cell" style="left:454px;top:117px;width:80px;text-align:center;"><span style="position:absolute;left:30px;top:2px;color:#1aa05a;font-weight:bold">涨</span><svg style="left:46px;top:14px" width="7" height="17" viewBox="0 0 7 17"><path d="M3.2 1.5 V16" stroke="#1aa05a" stroke-width="1.3"/><path d="M0.6 5 L3.2 0.8 L5.8 5" fill="none" stroke="#1aa05a" stroke-width="1.3"/></svg></div>
<div class="vl" style="left:534px;top:117px;height:39px"></div>
<div class="cell" style="left:535px;top:117px;width:110px;"><span class="bdg" style="background:#eee;color:#666">已平仓</span></div>
<div class="vl" style="left:645px;top:117px;height:39px"></div>
<div class="cell" style="left:646px;top:117px;width:80px;">5000.0000</div>
<div class="vl" style="left:726px;top:117px;height:39px"></div>
<div class="cell" style="left:727px;top:117px;width:90px;">亏损</div>
<div class="vl" style="left:817px;top:117px;height:39px"></div>
<div class="cell" style="left:818px;top:117px;width:90px;"><span class="bdg" style="background:#FF5722">亏损</span></div>
<div class="vl" style="left:908px;top:117px;height:39px"></div>
<div class="cell" style="left:909px;top:117px;width:100px;text-align:right;padding-right:25px;text-overflow:clip;">-5000.0000</div>
<div class="vl" style="left:1009px;top:117px;height:39px"></div>
<div class="cell" style="left:1010px;top:117px;width:100px;">29953.9100</div>
<div class="vl" style="left:1110px;top:117px;height:39px"></div>
<div class="cell" style="left:1111px;top:117px;width:100px;">29654.3100</div>
<div class="vl" style="left:1211px;top:117px;height:39px"></div>
<div class="cell" style="left:1212px;top:117px;width:170px;">2023-04-13 15:20:09</div>
<div class="vl" style="left:1382px;top:117px;height:39px"></div>
<div class="cell" style="left:1383px;top:117px;width:100px;text-align:center;"></div>
<div class="vl" style="left:1483px;top:117px;height:39px"></div>
<div class="a" style="left:0;top:156px;width:1483px;height:39px;background:#f4fdf8;border-bottom:1px solid #e6e6e6"></div>
<div class="cell" style="left:0px;top:156px;width:100px;">1943</div>
<div class="vl" style="left:100px;top:156px;height:39px"></div>
<div class="cell" style="left:101px;top:156px;width:130px;">3842124837</div>
<div class="vl" style="left:231px;top:156px;height:39px"></div>
<div class="cell" style="left:232px;top:156px;width:140px;">BTC/USDT<span style="font-size:10px;color:#999">-30S</span></div>
<div class="vl" style="left:372px;top:156px;height:39px"></div>
<div class="cell" style="left:373px;top:156px;width:80px;">USDT</div>
<div class="vl" style="left:453px;top:156px;height:39px"></div>
<div class="cell" style="left:454px;top:156px;width:80px;text-align:center;"><span style="position:absolute;left:30px;top:2px;color:#1aa05a;font-weight:bold">涨</span><svg style="left:46px;top:14px" width="7" height="17" viewBox="0 0 7 17"><path d="M3.2 1.5 V16" stroke="#1aa05a" stroke-width="1.3"/><path d="M0.6 5 L3.2 0.8 L5.8 5" fill="none" stroke="#1aa05a" stroke-width="1.3"/></svg></div>
<div class="vl" style="left:534px;top:156px;height:39px"></div>
<div class="cell" style="left:535px;top:156px;width:110px;"><span class="bdg" style="background:#eee;color:#666">已平仓</span></div>
<div class="vl" style="left:645px;top:156px;height:39px"></div>
<div class="cell" style="left:646px;top:156px;width:80px;">500.0000</div>
<div class="vl" style="left:726px;top:156px;height:39px"></div>
<div class="cell" style="left:727px;top:156px;width:90px;">盈利</div>
<div class="vl" style="left:817px;top:156px;height:39px"></div>
<div class="cell" style="left:818px;top:156px;width:90px;"><span class="bdg" style="background:#009688">盈利</span></div>
<div class="vl" style="left:908px;top:156px;height:39px"></div>
<div class="cell" style="left:909px;top:156px;width:100px;text-align:right;padding-right:25px;text-overflow:clip;"><b style="color:#f00">40.0000</b></div>
<div class="vl" style="left:1009px;top:156px;height:39px"></div>
<div class="cell" style="left:1010px;top:156px;width:100px;">29950.1100</div>
<div class="vl" style="left:1110px;top:156px;height:39px"></div>
<div class="cell" style="left:1111px;top:156px;width:100px;">29951.5100</div>
<div class="vl" style="left:1211px;top:156px;height:39px"></div>
<div class="cell" style="left:1212px;top:156px;width:170px;">2023-04-13 15:18:53</div>
<div class="vl" style="left:1382px;top:156px;height:39px"></div>
<div class="cell" style="left:1383px;top:156px;width:100px;text-align:center;"></div>
<div class="vl" style="left:1483px;top:156px;height:39px"></div>
<div class="a" style="left:0;top:195px;width:1483px;height:39px;background:#f4fdf8;border-bottom:1px solid #e6e6e6"></div>
<div class="cell" style="left:0px;top:195px;width:100px;">1942</div>
<div class="vl" style="left:100px;top:195px;height:39px"></div>
<div class="cell" style="left:101px;top:195px;width:130px;">3842124837</div>
<div class="vl" style="left:231px;top:195px;height:39px"></div>
<div class="cell" style="left:232px;top:195px;width:140px;">BTC/USDT<span style="font-size:10px;color:#999">-30S</span></div>
<div class="vl" style="left:372px;top:195px;height:39px"></div>
<div class="cell" style="left:373px;top:195px;width:80px;">USDT</div>
<div class="vl" style="left:453px;top:195px;height:39px"></div>
<div class="cell" style="left:454px;top:195px;width:80px;text-align:center;"><span style="position:absolute;left:30px;top:2px;color:#1aa05a;font-weight:bold">涨</span><svg style="left:46px;top:14px" width="7" height="17" viewBox="0 0 7 17"><path d="M3.2 1.5 V16" stroke="#1aa05a" stroke-width="1.3"/><path d="M0.6 5 L3.2 0.8 L5.8 5" fill="none" stroke="#1aa05a" stroke-width="1.3"/></svg></div>
<div class="vl" style="left:534px;top:195px;height:39px"></div>
<div class="cell" style="left:535px;top:195px;width:110px;"><span class="bdg" style="background:#eee;color:#666">已平仓</span></div>
<div class="vl" style="left:645px;top:195px;height:39px"></div>
<div class="cell" style="left:646px;top:195px;width:80px;">108.0000</div>
<div class="vl" style="left:726px;top:195px;height:39px"></div>
<div class="cell" style="left:727px;top:195px;width:90px;">盈利</div>
<div class="vl" style="left:817px;top:195px;height:39px"></div>
<div class="cell" style="left:818px;top:195px;width:90px;"><span class="bdg" style="background:#009688">盈利</span></div>
<div class="vl" style="left:908px;top:195px;height:39px"></div>
<div class="cell" style="left:909px;top:195px;width:100px;text-align:right;padding-right:25px;text-overflow:clip;"><b style="color:#f00">8.6400</b></div>
<div class="vl" style="left:1009px;top:195px;height:39px"></div>
<div class="cell" style="left:1010px;top:195px;width:100px;">29956.9100</div>
<div class="vl" style="left:1110px;top:195px;height:39px"></div>
<div class="cell" style="left:1111px;top:195px;width:100px;">29961.0100</div>
<div class="vl" style="left:1211px;top:195px;height:39px"></div>
<div class="cell" style="left:1212px;top:195px;width:170px;">2023-04-13 15:14:11</div>
<div class="vl" style="left:1382px;top:195px;height:39px"></div>
<div class="cell" style="left:1383px;top:195px;width:100px;text-align:center;"></div>
<div class="vl" style="left:1483px;top:195px;height:39px"></div>
<div class="a" style="left:0;top:234px;width:1483px;height:39px;background:#f4fdf8;border-bottom:1px solid #e6e6e6"></div>
<div class="cell" style="left:0px;top:234px;width:100px;">1941</div>
<div class="vl" style="left:100px;top:234px;height:39px"></div>
<div class="cell" style="left:101px;top:234px;width:130px;">3842124837</div>
<div class="vl" style="left:231px;top:234px;height:39px"></div>
<div class="cell" style="left:232px;top:234px;width:140px;">BTC/USDT<span style="font-size:10px;color:#999">-30S</span></div>
<div class="vl" style="left:372px;top:234px;height:39px"></div>
<div class="cell" style="left:373px;top:234px;width:80px;">USDT</div>
<div class="vl" style="left:453px;top:234px;height:39px"></div>
<div class="cell" style="left:454px;top:234px;width:80px;text-align:center;"><span style="position:absolute;left:30px;top:2px;color:#1aa05a;font-weight:bold">涨</span><svg style="left:46px;top:14px" width="7" height="17" viewBox="0 0 7 17"><path d="M3.2 1.5 V16" stroke="#1aa05a" stroke-width="1.3"/><path d="M0.6 5 L3.2 0.8 L5.8 5" fill="none" stroke="#1aa05a" stroke-width="1.3"/></svg></div>
<div class="vl" style="left:534px;top:234px;height:39px"></div>
<div class="cell" style="left:535px;top:234px;width:110px;"><span class="bdg" style="background:#eee;color:#666">已平仓</span></div>
<div class="vl" style="left:645px;top:234px;height:39px"></div>
<div class="cell" style="left:646px;top:234px;width:80px;">1000.0000</div>
<div class="vl" style="left:726px;top:234px;height:39px"></div>
<div class="cell" style="left:727px;top:234px;width:90px;">盈利</div>
<div class="vl" style="left:817px;top:234px;height:39px"></div>
<div class="cell" style="left:818px;top:234px;width:90px;"><span class="bdg" style="background:#009688">盈利</span></div>
<div class="vl" style="left:908px;top:234px;height:39px"></div>
<div class="cell" style="left:909px;top:234px;width:100px;text-align:right;padding-right:25px;text-overflow:clip;"><b style="color:#f00">80.0000</b></div>
<div class="vl" style="left:1009px;top:234px;height:39px"></div>
<div class="cell" style="left:1010px;top:234px;width:100px;">30018.0100</div>
<div class="vl" style="left:1110px;top:234px;height:39px"></div>
<div class="cell" style="left:1111px;top:234px;width:100px;">30318.2100</div>
<div class="vl" style="left:1211px;top:234px;height:39px"></div>
<div class="cell" style="left:1212px;top:234px;width:170px;">2023-04-11 20:44:59</div>
<div class="vl" style="left:1382px;top:234px;height:39px"></div>
<div class="cell" style="left:1383px;top:234px;width:100px;text-align:center;"></div>
<div class="vl" style="left:1483px;top:234px;height:39px"></div>
<div class="a" style="left:0;top:273px;width:1483px;height:39px;background:#fef8f8;border-bottom:1px solid #e6e6e6"></div>
<div class="cell" style="left:0px;top:273px;width:100px;">1940</div>
<div class="vl" style="left:100px;top:273px;height:39px"></div>
<div class="cell" style="left:101px;top:273px;width:130px;">3842124837</div>
<div class="vl" style="left:231px;top:273px;height:39px"></div>
<div class="cell" style="left:232px;top:273px;width:140px;">BTC/USDT<span style="font-size:10px;color:#999">-60S</span></div>
<div class="vl" style="left:372px;top:273px;height:39px"></div>
<div class="cell" style="left:373px;top:273px;width:80px;">USDT</div>
<div class="vl" style="left:453px;top:273px;height:39px"></div>
<div class="cell" style="left:454px;top:273px;width:80px;text-align:center;"><span style="position:absolute;left:30px;top:2px;color:#e4002b;font-weight:bold">跌</span><svg style="left:46px;top:14px" width="7" height="17" viewBox="0 0 7 17"><path d="M3.2 0.5 V15" stroke="#e4002b" stroke-width="1.3"/><path d="M0.6 11.5 L3.2 15.7 L5.8 11.5" fill="none" stroke="#e4002b" stroke-width="1.3"/></svg></div>
<div class="vl" style="left:534px;top:273px;height:39px"></div>
<div class="cell" style="left:535px;top:273px;width:110px;"><span class="bdg" style="background:#eee;color:#666">已平仓</span></div>
<div class="vl" style="left:645px;top:273px;height:39px"></div>
<div class="cell" style="left:646px;top:273px;width:80px;">20000.0000</div>
<div class="vl" style="left:726px;top:273px;height:39px"></div>
<div class="cell" style="left:727px;top:273px;width:90px;">盈利</div>
<div class="vl" style="left:817px;top:273px;height:39px"></div>
<div class="cell" style="left:818px;top:273px;width:90px;"><span class="bdg" style="background:#009688">盈利</span></div>
<div class="vl" style="left:908px;top:273px;height:39px"></div>
<div class="cell" style="left:909px;top:273px;width:100px;text-align:right;padding-right:25px;text-overflow:clip;"><b style="color:#f00">16000.0000</b></div>
<div class="vl" style="left:1009px;top:273px;height:39px"></div>
<div class="cell" style="left:1010px;top:273px;width:100px;">22410.4100</div>
<div class="vl" style="left:1110px;top:273px;height:39px"></div>
<div class="cell" style="left:1111px;top:273px;width:100px;">22406.2100</div>
<div class="vl" style="left:1211px;top:273px;height:39px"></div>
<div class="cell" style="left:1212px;top:273px;width:170px;">2023-03-07 21:59:39</div>
<div class="vl" style="left:1382px;top:273px;height:39px"></div>
<div class="cell" style="left:1383px;top:273px;width:100px;text-align:center;"></div>
<div class="vl" style="left:1483px;top:273px;height:39px"></div>
<div class="a" style="left:0;top:312px;width:1483px;height:39px;background:#f4fdf8;border-bottom:1px solid #e6e6e6"></div>
<div class="cell" style="left:0px;top:312px;width:100px;">1939</div>
<div class="vl" style="left:100px;top:312px;height:39px"></div>
<div class="cell" style="left:101px;top:312px;width:130px;">3842124837</div>
<div class="vl" style="left:231px;top:312px;height:39px"></div>
<div class="cell" style="left:232px;top:312px;width:140px;">BTC/USDT<span style="font-size:10px;color:#999">-60S</span></div>
<div class="vl" style="left:372px;top:312px;height:39px"></div>
<div class="cell" style="left:373px;top:312px;width:80px;">USDT</div>
<div class="vl" style="left:453px;top:312px;height:39px"></div>
<div class="cell" style="left:454px;top:312px;width:80px;text-align:center;"><span style="position:absolute;left:30px;top:2px;color:#1aa05a;font-weight:bold">涨</span><svg style="left:46px;top:14px" width="7" height="17" viewBox="0 0 7 17"><path d="M3.2 1.5 V16" stroke="#1aa05a" stroke-width="1.3"/><path d="M0.6 5 L3.2 0.8 L5.8 5" fill="none" stroke="#1aa05a" stroke-width="1.3"/></svg></div>
<div class="vl" style="left:534px;top:312px;height:39px"></div>
<div class="cell" style="left:535px;top:312px;width:110px;"><span class="bdg" style="background:#eee;color:#666">已平仓</span></div>
<div class="vl" style="left:645px;top:312px;height:39px"></div>
<div class="cell" style="left:646px;top:312px;width:80px;">1000.0000</div>
<div class="vl" style="left:726px;top:312px;height:39px"></div>
<div class="cell" style="left:727px;top:312px;width:90px;">盈利</div>
<div class="vl" style="left:817px;top:312px;height:39px"></div>
<div class="cell" style="left:818px;top:312px;width:90px;"><span class="bdg" style="background:#009688">盈利</span></div>
<div class="vl" style="left:908px;top:312px;height:39px"></div>
<div class="cell" style="left:909px;top:312px;width:100px;text-align:right;padding-right:25px;text-overflow:clip;"><b style="color:#f00">800.0000</b></div>
<div class="vl" style="left:1009px;top:312px;height:39px"></div>
<div class="cell" style="left:1010px;top:312px;width:100px;">22431.7100</div>
<div class="vl" style="left:1110px;top:312px;height:39px"></div>
<div class="cell" style="left:1111px;top:312px;width:100px;">22656.0100</div>
<div class="vl" style="left:1211px;top:312px;height:39px"></div>
<div class="cell" style="left:1212px;top:312px;width:170px;">2023-03-07 21:55:01</div>
<div class="vl" style="left:1382px;top:312px;height:39px"></div>
<div class="cell" style="left:1383px;top:312px;width:100px;text-align:center;"></div>
<div class="vl" style="left:1483px;top:312px;height:39px"></div>
<div class="a" style="left:0;top:351px;width:1483px;height:39px;background:#f4fdf8;border-bottom:1px solid #e6e6e6"></div>
<div class="cell" style="left:0px;top:351px;width:100px;">1938</div>
<div class="vl" style="left:100px;top:351px;height:39px"></div>
<div class="cell" style="left:101px;top:351px;width:130px;">3842124837</div>
<div class="vl" style="left:231px;top:351px;height:39px"></div>
<div class="cell" style="left:232px;top:351px;width:140px;">BTC/USDT<span style="font-size:10px;color:#999">-60S</span></div>
<div class="vl" style="left:372px;top:351px;height:39px"></div>
<div class="cell" style="left:373px;top:351px;width:80px;">USDT</div>
<div class="vl" style="left:453px;top:351px;height:39px"></div>
<div class="cell" style="left:454px;top:351px;width:80px;text-align:center;"><span style="position:absolute;left:30px;top:2px;color:#1aa05a;font-weight:bold">涨</span><svg style="left:46px;top:14px" width="7" height="17" viewBox="0 0 7 17"><path d="M3.2 1.5 V16" stroke="#1aa05a" stroke-width="1.3"/><path d="M0.6 5 L3.2 0.8 L5.8 5" fill="none" stroke="#1aa05a" stroke-width="1.3"/></svg></div>
<div class="vl" style="left:534px;top:351px;height:39px"></div>
<div class="cell" style="left:535px;top:351px;width:110px;"><span class="bdg" style="background:#eee;color:#666">平仓中</span></div>
<div class="vl" style="left:645px;top:351px;height:39px"></div>
<div class="cell" style="left:646px;top:351px;width:80px;">1000.0000</div>
<div class="vl" style="left:726px;top:351px;height:39px"></div>
<div class="cell" style="left:727px;top:351px;width:90px;">盈利</div>
<div class="vl" style="left:817px;top:351px;height:39px"></div>
<div class="cell" style="left:818px;top:351px;width:90px;"><span class="bdg" style="background:#FF5722">无</span></div>
<div class="vl" style="left:908px;top:351px;height:39px"></div>
<div class="cell" style="left:909px;top:351px;width:100px;text-align:right;padding-right:25px;text-overflow:clip;">0.0000</div>
<div class="vl" style="left:1009px;top:351px;height:39px"></div>
<div class="cell" style="left:1010px;top:351px;width:100px;">22656.6100</div>
<div class="vl" style="left:1110px;top:351px;height:39px"></div>
<div class="cell" style="left:1111px;top:351px;width:100px;">22656.6100</div>
<div class="vl" style="left:1211px;top:351px;height:39px"></div>
<div class="cell" style="left:1212px;top:351px;width:170px;">2023-02-09 14:39:24</div>
<div class="vl" style="left:1382px;top:351px;height:39px"></div>
<div class="cell" style="left:1383px;top:351px;width:100px;text-align:center;"></div>
<div class="vl" style="left:1483px;top:351px;height:39px"></div>
<div class="a" style="left:0;top:390px;width:1483px;height:39px;background:#f4fdf8;border-bottom:1px solid #e6e6e6"></div>
<div class="cell" style="left:0px;top:390px;width:100px;">1937</div>
<div class="vl" style="left:100px;top:390px;height:39px"></div>
<div class="cell" style="left:101px;top:390px;width:130px;">3842124837</div>
<div class="vl" style="left:231px;top:390px;height:39px"></div>
<div class="cell" style="left:232px;top:390px;width:140px;">BTC/USDT<span style="font-size:10px;color:#999">-180S</span></div>
<div class="vl" style="left:372px;top:390px;height:39px"></div>
<div class="cell" style="left:373px;top:390px;width:80px;">USDT</div>
<div class="vl" style="left:453px;top:390px;height:39px"></div>
<div class="cell" style="left:454px;top:390px;width:80px;text-align:center;"><span style="position:absolute;left:30px;top:2px;color:#1aa05a;font-weight:bold">涨</span><svg style="left:46px;top:14px" width="7" height="17" viewBox="0 0 7 17"><path d="M3.2 1.5 V16" stroke="#1aa05a" stroke-width="1.3"/><path d="M0.6 5 L3.2 0.8 L5.8 5" fill="none" stroke="#1aa05a" stroke-width="1.3"/></svg></div>
<div class="vl" style="left:534px;top:390px;height:39px"></div>
<div class="cell" style="left:535px;top:390px;width:110px;"><span class="bdg" style="background:#eee;color:#666">已平仓</span></div>
<div class="vl" style="left:645px;top:390px;height:39px"></div>
<div class="cell" style="left:646px;top:390px;width:80px;">1000.0000</div>
<div class="vl" style="left:726px;top:390px;height:39px"></div>
<div class="cell" style="left:727px;top:390px;width:90px;">盈利</div>
<div class="vl" style="left:817px;top:390px;height:39px"></div>
<div class="cell" style="left:818px;top:390px;width:90px;"><span class="bdg" style="background:#009688">盈利</span></div>
<div class="vl" style="left:908px;top:390px;height:39px"></div>
<div class="cell" style="left:909px;top:390px;width:100px;text-align:right;padding-right:25px;text-overflow:clip;"><b style="color:#f00">900.0000</b></div>
<div class="vl" style="left:1009px;top:390px;height:39px"></div>
<div class="cell" style="left:1010px;top:390px;width:100px;">20825.0100</div>
<div class="vl" style="left:1110px;top:390px;height:39px"></div>
<div class="cell" style="left:1111px;top:390px;width:100px;">20831.1100</div>
<div class="vl" style="left:1211px;top:390px;height:39px"></div>
<div class="cell" style="left:1212px;top:390px;width:170px;">2023-01-19 16:05:23</div>
<div class="vl" style="left:1382px;top:390px;height:39px"></div>
<div class="cell" style="left:1383px;top:390px;width:100px;text-align:center;"></div>
<div class="vl" style="left:1483px;top:390px;height:39px"></div>
<div class="a" style="left:0;top:429px;width:1483px;height:39px;background:#f4fdf8;border-bottom:1px solid #e6e6e6"></div>
<div class="cell" style="left:0px;top:429px;width:100px;">1936</div>
<div class="vl" style="left:100px;top:429px;height:39px"></div>
<div class="cell" style="left:101px;top:429px;width:130px;">7847007283</div>
<div class="vl" style="left:231px;top:429px;height:39px"></div>
<div class="cell" style="left:232px;top:429px;width:140px;">BTC/USDT<span style="font-size:10px;color:#999">-60S</span></div>
<div class="vl" style="left:372px;top:429px;height:39px"></div>
<div class="cell" style="left:373px;top:429px;width:80px;">USDT</div>
<div class="vl" style="left:453px;top:429px;height:39px"></div>
<div class="cell" style="left:454px;top:429px;width:80px;text-align:center;"><span style="position:absolute;left:30px;top:2px;color:#1aa05a;font-weight:bold">涨</span><svg style="left:46px;top:14px" width="7" height="17" viewBox="0 0 7 17"><path d="M3.2 1.5 V16" stroke="#1aa05a" stroke-width="1.3"/><path d="M0.6 5 L3.2 0.8 L5.8 5" fill="none" stroke="#1aa05a" stroke-width="1.3"/></svg></div>
<div class="vl" style="left:534px;top:429px;height:39px"></div>
<div class="cell" style="left:535px;top:429px;width:110px;"><span class="bdg" style="background:#eee;color:#666">已平仓</span></div>
<div class="vl" style="left:645px;top:429px;height:39px"></div>
<div class="cell" style="left:646px;top:429px;width:80px;">1000.0000</div>
<div class="vl" style="left:726px;top:429px;height:39px"></div>
<div class="cell" style="left:727px;top:429px;width:90px;">盈利</div>
<div class="vl" style="left:817px;top:429px;height:39px"></div>
<div class="cell" style="left:818px;top:429px;width:90px;"><span class="bdg" style="background:#009688">盈利</span></div>
<div class="vl" style="left:908px;top:429px;height:39px"></div>
<div class="cell" style="left:909px;top:429px;width:100px;text-align:right;padding-right:25px;text-overflow:clip;"><b style="color:#f00">800.0000</b></div>
<div class="vl" style="left:1009px;top:429px;height:39px"></div>
<div class="cell" style="left:1010px;top:429px;width:100px;">17927.2100</div>
<div class="vl" style="left:1110px;top:429px;height:39px"></div>
<div class="cell" style="left:1111px;top:429px;width:100px;">18106.5100</div>
<div class="vl" style="left:1211px;top:429px;height:39px"></div>
<div class="cell" style="left:1212px;top:429px;width:170px;">2022-12-15 04:14:01</div>
<div class="vl" style="left:1382px;top:429px;height:39px"></div>
<div class="cell" style="left:1383px;top:429px;width:100px;text-align:center;"></div>
<div class="vl" style="left:1483px;top:429px;height:39px"></div>
<div class="a" style="left:0;top:468px;width:1483px;height:39px;background:#f4fdf8;border-bottom:1px solid #e6e6e6"></div>
<div class="cell" style="left:0px;top:468px;width:100px;">1935</div>
<div class="vl" style="left:100px;top:468px;height:39px"></div>
<div class="cell" style="left:101px;top:468px;width:130px;">7847007283</div>
<div class="vl" style="left:231px;top:468px;height:39px"></div>
<div class="cell" style="left:232px;top:468px;width:140px;">BTC/USDT<span style="font-size:10px;color:#999">-60S</span></div>
<div class="vl" style="left:372px;top:468px;height:39px"></div>
<div class="cell" style="left:373px;top:468px;width:80px;">USDT</div>
<div class="vl" style="left:453px;top:468px;height:39px"></div>
<div class="cell" style="left:454px;top:468px;width:80px;text-align:center;"><span style="position:absolute;left:30px;top:2px;color:#1aa05a;font-weight:bold">涨</span><svg style="left:46px;top:14px" width="7" height="17" viewBox="0 0 7 17"><path d="M3.2 1.5 V16" stroke="#1aa05a" stroke-width="1.3"/><path d="M0.6 5 L3.2 0.8 L5.8 5" fill="none" stroke="#1aa05a" stroke-width="1.3"/></svg></div>
<div class="vl" style="left:534px;top:468px;height:39px"></div>
<div class="cell" style="left:535px;top:468px;width:110px;"><span class="bdg" style="background:#eee;color:#666">已平仓</span></div>
<div class="vl" style="left:645px;top:468px;height:39px"></div>
<div class="cell" style="left:646px;top:468px;width:80px;">1000.0000</div>
<div class="vl" style="left:726px;top:468px;height:39px"></div>
<div class="cell" style="left:727px;top:468px;width:90px;">盈利</div>
<div class="vl" style="left:817px;top:468px;height:39px"></div>
<div class="cell" style="left:818px;top:468px;width:90px;"><span class="bdg" style="background:#009688">盈利</span></div>
<div class="vl" style="left:908px;top:468px;height:39px"></div>
<div class="cell" style="left:909px;top:468px;width:100px;text-align:right;padding-right:25px;text-overflow:clip;"><b style="color:#f00">800.0000</b></div>
<div class="vl" style="left:1009px;top:468px;height:39px"></div>
<div class="cell" style="left:1010px;top:468px;width:100px;">17714.5100</div>
<div class="vl" style="left:1110px;top:468px;height:39px"></div>
<div class="cell" style="left:1111px;top:468px;width:100px;">17727.3100</div>
<div class="vl" style="left:1211px;top:468px;height:39px"></div>
<div class="cell" style="left:1212px;top:468px;width:170px;">2022-12-14 02:41:46</div>
<div class="vl" style="left:1382px;top:468px;height:39px"></div>
<div class="cell" style="left:1383px;top:468px;width:100px;text-align:center;"></div>
<div class="vl" style="left:1483px;top:468px;height:39px"></div>
<div class="a" style="left:0;top:507px;width:1483px;height:39px;background:#f4fdf8;border-bottom:1px solid #e6e6e6"></div>
<div class="cell" style="left:0px;top:507px;width:100px;">1934</div>
<div class="vl" style="left:100px;top:507px;height:39px"></div>
<div class="cell" style="left:101px;top:507px;width:130px;">7847007283</div>
<div class="vl" style="left:231px;top:507px;height:39px"></div>
<div class="cell" style="left:232px;top:507px;width:140px;">BTC/USDT<span style="font-size:10px;color:#999">-60S</span></div>
<div class="vl" style="left:372px;top:507px;height:39px"></div>
<div class="cell" style="left:373px;top:507px;width:80px;">USDT</div>
<div class="vl" style="left:453px;top:507px;height:39px"></div>
<div class="cell" style="left:454px;top:507px;width:80px;text-align:center;"><span style="position:absolute;left:30px;top:2px;color:#1aa05a;font-weight:bold">涨</span><svg style="left:46px;top:14px" width="7" height="17" viewBox="0 0 7 17"><path d="M3.2 1.5 V16" stroke="#1aa05a" stroke-width="1.3"/><path d="M0.6 5 L3.2 0.8 L5.8 5" fill="none" stroke="#1aa05a" stroke-width="1.3"/></svg></div>
<div class="vl" style="left:534px;top:507px;height:39px"></div>
<div class="cell" style="left:535px;top:507px;width:110px;"><span class="bdg" style="background:#eee;color:#666">已平仓</span></div>
<div class="vl" style="left:645px;top:507px;height:39px"></div>
<div class="cell" style="left:646px;top:507px;width:80px;">1000.0000</div>
<div class="vl" style="left:726px;top:507px;height:39px"></div>
<div class="cell" style="left:727px;top:507px;width:90px;">盈利</div>
<div class="vl" style="left:817px;top:507px;height:39px"></div>
<div class="cell" style="left:818px;top:507px;width:90px;"><span class="bdg" style="background:#009688">盈利</span></div>
<div class="vl" style="left:908px;top:507px;height:39px"></div>
<div class="cell" style="left:909px;top:507px;width:100px;text-align:right;padding-right:25px;text-overflow:clip;"><b style="color:#f00">800.0000</b></div>
<div class="vl" style="left:1009px;top:507px;height:39px"></div>
<div class="cell" style="left:1010px;top:507px;width:100px;">17714.5100</div>
<div class="vl" style="left:1110px;top:507px;height:39px"></div>
<div class="cell" style="left:1111px;top:507px;width:100px;">17727.3100</div>
<div class="vl" style="left:1211px;top:507px;height:39px"></div>
<div class="cell" style="left:1212px;top:507px;width:170px;">2022-12-14 02:41:46</div>
<div class="vl" style="left:1382px;top:507px;height:39px"></div>
<div class="cell" style="left:1383px;top:507px;width:100px;text-align:center;"></div>
<div class="vl" style="left:1483px;top:507px;height:39px"></div>
</div>
<div class="a" style="left:1873px;top:297px;width:16px;height:510px;background:#f1f1f1"></div>
<div class="a" style="left:1875px;top:314px;width:13px;height:312px;background:#c1c1c1"></div>
<i class="a" style="left:1877px;top:303px;width:0;height:0;border-left:4px solid transparent;border-right:4px solid transparent;border-bottom:4px solid #a3a3a3"></i>
<i class="a" style="left:1877px;top:797px;width:0;height:0;border-left:4px solid transparent;border-right:4px solid transparent;border-top:4px solid #505050"></i>
<div class="a" style="left:251px;top:807px;width:1638px;height:40px;background:#f2f2f2;border-top:1px solid #e6e6e6;border-bottom:1px solid #e6e6e6"></div>
<div class="cell" style="left:251px;top:808px;width:100px;">小计</div>
<div class="vl" style="left:351px;top:808px;height:38px"></div>
<div class="cell" style="left:352px;top:808px;width:130px;"></div>
<div class="vl" style="left:482px;top:808px;height:38px"></div>
<div class="cell" style="left:483px;top:808px;width:140px;"></div>
<div class="vl" style="left:623px;top:808px;height:38px"></div>
<div class="cell" style="left:624px;top:808px;width:80px;"></div>
<div class="vl" style="left:704px;top:808px;height:38px"></div>
<div class="cell" style="left:705px;top:808px;width:80px;"></div>
<div class="vl" style="left:785px;top:808px;height:38px"></div>
<div class="cell" style="left:786px;top:808px;width:110px;"></div>
<div class="vl" style="left:896px;top:808px;height:38px"></div>
<div class="cell" style="left:897px;top:808px;width:80px;">36146.0000</div>
<div class="vl" style="left:977px;top:808px;height:38px"></div>
<div class="cell" style="left:978px;top:808px;width:90px;"></div>
<div class="vl" style="left:1068px;top:808px;height:38px"></div>
<div class="cell" style="left:1069px;top:808px;width:90px;"></div>
<div class="vl" style="left:1159px;top:808px;height:38px"></div>
<div class="cell" style="left:1160px;top:808px;width:100px;text-align:right;padding-right:25px;">13963.68</div>
<div class="vl" style="left:1260px;top:808px;height:38px"></div>
<div class="cell" style="left:1261px;top:808px;width:100px;"></div>
<div class="vl" style="left:1361px;top:808px;height:38px"></div>
<div class="cell" style="left:1362px;top:808px;width:100px;"></div>
<div class="vl" style="left:1462px;top:808px;height:38px"></div>
<div class="cell" style="left:1463px;top:808px;width:170px;"></div>
<div class="vl" style="left:1633px;top:808px;height:38px"></div>
<div class="cell" style="left:1634px;top:808px;width:100px;"></div>
<div class="vl" style="left:1734px;top:808px;height:38px"></div>
<svg style="left:268px;top:860px" width="8" height="14" viewBox="0 0 8 14"><path d="M7.3 0.6 L1 7 L7.3 13.4" fill="none" stroke="#d2d2d2" stroke-width="1.2"/></svg>
<div class="a" style="left:290px;top:854px;width:31px;height:26px;background:#009688;border-radius:2px;color:#fff;text-align:center;line-height:26px;font-size:12px">1</div>
<span class="a" style="left:332px;top:858px;line-height:18px;font-size:12px;color:#333">2</span>
<span class="a" style="left:361px;top:858px;line-height:18px;font-size:12px;color:#333">3</span>
<span class="a" style="left:379px;top:858px;line-height:18px;font-size:12px;color:#999">…</span>
<span class="a" style="left:402px;top:858px;line-height:18px;font-size:12px;color:#333">90</span>
<svg style="left:442px;top:860px" width="8" height="14" viewBox="0 0 8 14"><path d="M0.7 0.6 L7 7 L0.7 13.4" fill="none" stroke="#333" stroke-width="1.2"/></svg>
<span class="a" style="left:465px;top:858px;line-height:18px;font-size:12px;color:#999">到第</span>
<div class="a" style="left:499px;top:854px;width:40px;height:26px;border:1px solid #e6e6e6;border-radius:2px;text-align:center;line-height:24px;font-size:12px;color:#333">1</div>
<span class="a" style="left:549px;top:858px;line-height:18px;font-size:12px;color:#999">页</span>
<div class="a" style="left:571px;top:854px;width:46px;height:26px;border:1px solid #e6e6e6;border-radius:2px;text-align:center;line-height:24px;font-size:12px;color:#333">确定</div>
<span class="a" style="left:627px;top:858px;line-height:18px;font-size:12px;color:#333">共 1781 条</span>
<div class="a" style="left:695px;top:854px;width:88px;height:26px;border:1px solid #e6e6e6;border-radius:2px;line-height:24px;font-size:12px;color:#333;padding-left:7px">20 条/页</div>
<svg style="left:768px;top:863px" width="10" height="7" viewBox="0 0 10 7"><path d="M1 1 L5 5.2 L9 1" fill="none" stroke="#000" stroke-width="1.8"/></svg>
<svg style="left:0;top:0;z-index:50" width="1920" height="940" viewBox="0 0 1920 940"><circle cx="1696.65" cy="563.35" r="139.8" fill="none" stroke="#f00" stroke-width="5"/><text transform="translate(1587.55,592.79) rotate(254.90) scale(0.85,1)" x="0" y="6.76" text-anchor="middle" font-family="Liberation Sans" font-weight="bold" font-size="26" fill="#f00" stroke="#f00" stroke-width="0.7">w</text><text transform="translate(1583.71,566.90) rotate(268.20) scale(0.85,1)" x="0" y="6.76" text-anchor="middle" font-family="Liberation Sans" font-weight="bold" font-size="26" fill="#f00" stroke="#f00" stroke-width="0.7">w</text><text transform="translate(1585.92,540.82) rotate(281.50) scale(0.85,1)" x="0" y="6.76" text-anchor="middle" font-family="Liberation Sans" font-weight="bold" font-size="26" fill="#f00" stroke="#f00" stroke-width="0.7">w</text><text transform="translate(1594.07,515.95) rotate(294.80) scale(0.85,1)" x="0" y="6.76" text-anchor="middle" font-family="Liberation Sans" font-weight="bold" font-size="26" fill="#f00" stroke="#f00" stroke-width="0.7">.</text><text transform="translate(1607.73,493.62) rotate(308.10) scale(0.85,1)" x="0" y="6.76" text-anchor="middle" font-family="Liberation Sans" font-weight="bold" font-size="26" fill="#f00" stroke="#f00" stroke-width="0.7">h</text><text transform="translate(1626.15,475.04) rotate(321.40) scale(0.85,1)" x="0" y="6.76" text-anchor="middle" font-family="Liberation Sans" font-weight="bold" font-size="26" fill="#f00" stroke="#f00" stroke-width="0.7">a</text><text transform="translate(1648.36,461.19) rotate(334.70) scale(0.85,1)" x="0" y="6.76" text-anchor="middle" font-family="Liberation Sans" font-weight="bold" font-size="26" fill="#f00" stroke="#f00" stroke-width="0.7">i</text><text transform="translate(1673.16,452.82) rotate(348.00) scale(0.85,1)" x="0" y="6.76" text-anchor="middle" font-family="Liberation Sans" font-weight="bold" font-size="26" fill="#f00" stroke="#f00" stroke-width="0.7">w</text><text transform="translate(1699.21,450.38) rotate(361.30) scale(0.85,1)" x="0" y="6.76" text-anchor="middle" font-family="Liberation Sans" font-weight="bold" font-size="26" fill="#f00" stroke="#f00" stroke-width="0.7">a</text><text transform="translate(1725.13,454.00) rotate(374.60) scale(0.85,1)" x="0" y="6.76" text-anchor="middle" font-family="Liberation Sans" font-weight="bold" font-size="26" fill="#f00" stroke="#f00" stroke-width="0.7">i</text><text transform="translate(1749.53,463.48) rotate(387.90) scale(0.85,1)" x="0" y="6.76" text-anchor="middle" font-family="Liberation Sans" font-weight="bold" font-size="26" fill="#f00" stroke="#f00" stroke-width="0.7">y</text><text transform="translate(1771.08,478.33) rotate(401.20) scale(0.85,1)" x="0" y="6.76" text-anchor="middle" font-family="Liberation Sans" font-weight="bold" font-size="26" fill="#f00" stroke="#f00" stroke-width="0.7">m</text><text transform="translate(1788.65,497.73) rotate(414.50) scale(0.85,1)" x="0" y="6.76" text-anchor="middle" font-family="Liberation Sans" font-weight="bold" font-size="26" fill="#f00" stroke="#f00" stroke-width="0.7">.</text><text transform="translate(1801.27,520.65) rotate(427.80) scale(0.85,1)" x="0" y="6.76" text-anchor="middle" font-family="Liberation Sans" font-weight="bold" font-size="26" fill="#f00" stroke="#f00" stroke-width="0.7">c</text><text transform="translate(1808.29,545.87) rotate(441.10) scale(0.85,1)" x="0" y="6.76" text-anchor="middle" font-family="Liberation Sans" font-weight="bold" font-size="26" fill="#f00" stroke="#f00" stroke-width="0.7">o</text><text transform="translate(1809.32,572.02) rotate(454.40) scale(0.85,1)" x="0" y="6.76" text-anchor="middle" font-family="Liberation Sans" font-weight="bold" font-size="26" fill="#f00" stroke="#f00" stroke-width="0.7">m</text><text transform="translate(1619.87,664.51) rotate(37.20)" x="0" y="3.64" text-anchor="middle" font-family="Liberation Sans" font-size="14" fill="#f00">h</text><text transform="translate(1632.02,672.68) rotate(30.59)" x="0" y="3.64" text-anchor="middle" font-family="Liberation Sans" font-size="14" fill="#f00">a</text><text transform="translate(1645.03,679.39) rotate(23.98)" x="0" y="3.64" text-anchor="middle" font-family="Liberation Sans" font-size="14" fill="#f00">i</text><text transform="translate(1658.74,684.56) rotate(17.37)" x="0" y="3.64" text-anchor="middle" font-family="Liberation Sans" font-size="14" fill="#f00">w</text><text transform="translate(1672.94,688.12) rotate(10.76)" x="0" y="3.64" text-anchor="middle" font-family="Liberation Sans" font-size="14" fill="#f00">a</text><text transform="translate(1687.46,690.02) rotate(4.15)" x="0" y="3.64" text-anchor="middle" font-family="Liberation Sans" font-size="14" fill="#f00">i</text><text transform="translate(1702.10,690.23) rotate(-2.46)" x="0" y="3.64" text-anchor="middle" font-family="Liberation Sans" font-size="14" fill="#f00">y</text><text transform="translate(1716.67,688.76) rotate(-9.07)" x="0" y="3.64" text-anchor="middle" font-family="Liberation Sans" font-size="14" fill="#f00">m</text><text transform="translate(1730.97,685.62) rotate(-15.68)" x="0" y="3.64" text-anchor="middle" font-family="Liberation Sans" font-size="14" fill="#f00">.</text><text transform="translate(1744.82,680.86) rotate(-22.29)" x="0" y="3.64" text-anchor="middle" font-family="Liberation Sans" font-size="14" fill="#f00">c</text><text transform="translate(1758.03,674.53) rotate(-28.90)" x="0" y="3.64" text-anchor="middle" font-family="Liberation Sans" font-size="14" fill="#f00">o</text><text transform="translate(1770.42,666.73) rotate(-35.51)" x="0" y="3.64" text-anchor="middle" font-family="Liberation Sans" font-size="14" fill="#f00">m</text><text x="1603.4" y="643" text-anchor="middle" font-family="Liberation Sans" font-weight="bold" font-size="25" fill="#f00" stroke="#f00" stroke-width="0.6">h</text><text x="1620.3" y="643" text-anchor="middle" font-family="Liberation Sans" font-weight="bold" font-size="25" fill="#f00" stroke="#f00" stroke-width="0.6">a</text><text x="1638.4" y="643" text-anchor="middle" font-family="Liberation Sans" font-weight="bold" font-size="25" fill="#f00" stroke="#f00" stroke-width="0.6">i</text><text x="1655.6" y="643" text-anchor="middle" font-family="Liberation Sans" font-weight="bold" font-size="25" fill="#f00" stroke="#f00" stroke-width="0.6">w</text><text x="1671.9" y="643" text-anchor="middle" font-family="Liberation Sans" font-weight="bold" font-size="25" fill="#f00" stroke="#f00" stroke-width="0.6">a</text><text x="1689.1" y="643" text-anchor="middle" font-family="Liberation Sans" font-weight="bold" font-size="25" fill="#f00" stroke="#f00" stroke-width="0.6">i</text><text x="1705" y="643" text-anchor="middle" font-family="Liberation Sans" font-weight="bold" font-size="25" fill="#f00" stroke="#f00" stroke-width="0.6">y</text><text x="1723.1" y="643" text-anchor="middle" font-family="Liberation Sans" font-weight="bold" font-size="25" fill="#f00" stroke="#f00" stroke-width="0.6">m</text><text x="1735.9" y="643" text-anchor="middle" font-family="Liberation Sans" font-weight="bold" font-size="25" fill="#f00" stroke="#f00" stroke-width="0.6">.</text><text x="1755.6" y="643" text-anchor="middle" font-family="Liberation Sans" font-weight="bold" font-size="25" fill="#f00" stroke="#f00" stroke-width="0.6">c</text><text x="1771.9" y="643" text-anchor="middle" font-family="Liberation Sans" font-weight="bold" font-size="25" fill="#f00" stroke="#f00" stroke-width="0.6">o</text><text x="1790" y="643" text-anchor="middle" font-family="Liberation Sans" font-weight="bold" font-size="25" fill="#f00" stroke="#f00" stroke-width="0.6">m</text><text x="1634.75" y="577" text-anchor="middle" font-family="Liberation Serif,serif" font-weight="normal" font-size="38" fill="#f00" stroke="#f00" stroke-width="0.6">海</text><text x="1676" y="577" text-anchor="middle" font-family="Liberation Serif,serif" font-weight="normal" font-size="38" fill="#f00" stroke="#f00" stroke-width="0.6">外</text><text x="1718.1" y="577" text-anchor="middle" font-family="Liberation Serif,serif" font-weight="normal" font-size="38" fill="#f00" stroke="#f00" stroke-width="0.6">源</text><text x="1759.35" y="577" text-anchor="middle" font-family="Liberation Serif,serif" font-weight="normal" font-size="38" fill="#f00" stroke="#f00" stroke-width="0.6">码</text></svg>

</body></html>
